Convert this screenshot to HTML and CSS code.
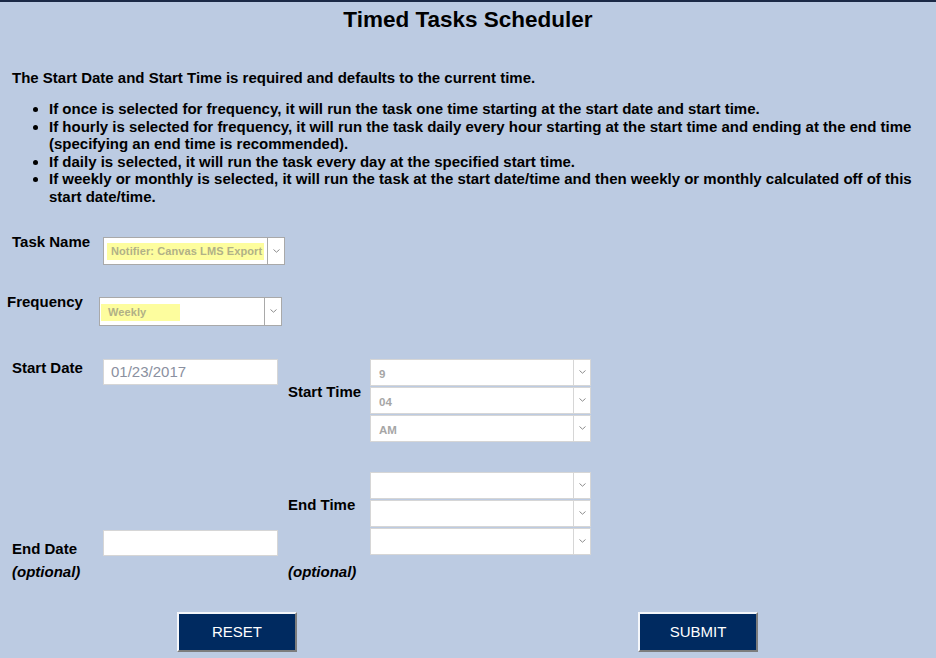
FILE: index.html
```html
<!DOCTYPE html>
<html>
<head>
<meta charset="utf-8">
<link rel="stylesheet" href="styles.css">
</head>
<body>
<div class="page">
  <h1 class="title">Timed Tasks Scheduler</h1>
  <p class="intro">The Start Date and Start Time is required and defaults to the current time.</p>
  <ul class="notes">
    <li>If once is selected for frequency, it will run the task one time starting at the start date and start time.</li>
    <li>If hourly is selected for frequency, it will run the task daily every hour starting at the start time and ending at the end time (specifying an end time is recommended).</li>
    <li>If daily is selected, it will run the task every day at the specified start time.</li>
    <li>If weekly or monthly is selected, it will run the task at the start date/time and then weekly or monthly calculated off of this start date/time.</li>
  </ul>

  <div class="row row-task">
    <div class="label label-task">Task Name</div>
    <div class="select select-task">
      <div class="select-value"><span class="hl hl-task">Notifier: Canvas LMS Export</span></div>
      <div class="select-arrow"><svg width="7" height="4" viewBox="0 0 7 4"><path d="M0.5 0.5 L3.5 3.2 L6.5 0.5" fill="none" stroke="#8c8c8c" stroke-width="1"/></svg></div>
    </div>
  </div>

  <div class="row row-freq">
    <div class="label label-freq">Frequency</div>
    <div class="select select-freq">
      <div class="select-value"><span class="hl hl-freq">Weekly</span></div>
      <div class="select-arrow"><svg width="7" height="4" viewBox="0 0 7 4"><path d="M0.5 0.5 L3.5 3.2 L6.5 0.5" fill="none" stroke="#8c8c8c" stroke-width="1"/></svg></div>
    </div>
  </div>

  <div class="dt-grid">
    <div class="label sd-label">Start Date</div>
    <div class="text-input sd-input">01/23/2017</div>
    <div class="label st-label">Start Time</div>
    <div class="sel-stack st-stack">
      <div class="select tsel"><div class="select-value tval">9</div><div class="select-arrow"><svg width="7" height="4" viewBox="0 0 7 4"><path d="M0.5 0.5 L3.5 3.2 L6.5 0.5" fill="none" stroke="#8c8c8c" stroke-width="1"/></svg></div></div>
      <div class="select tsel"><div class="select-value tval">04</div><div class="select-arrow"><svg width="7" height="4" viewBox="0 0 7 4"><path d="M0.5 0.5 L3.5 3.2 L6.5 0.5" fill="none" stroke="#8c8c8c" stroke-width="1"/></svg></div></div>
      <div class="select tsel"><div class="select-value tval">AM</div><div class="select-arrow"><svg width="7" height="4" viewBox="0 0 7 4"><path d="M0.5 0.5 L3.5 3.2 L6.5 0.5" fill="none" stroke="#8c8c8c" stroke-width="1"/></svg></div></div>
    </div>

    <div class="label ed-label">End Date</div>
    <div class="text-input ed-input"></div>
    <div class="label et-label">End Time</div>
    <div class="sel-stack et-stack">
      <div class="select tsel"><div class="select-value tval"></div><div class="select-arrow"><svg width="7" height="4" viewBox="0 0 7 4"><path d="M0.5 0.5 L3.5 3.2 L6.5 0.5" fill="none" stroke="#8c8c8c" stroke-width="1"/></svg></div></div>
      <div class="select tsel"><div class="select-value tval"></div><div class="select-arrow"><svg width="7" height="4" viewBox="0 0 7 4"><path d="M0.5 0.5 L3.5 3.2 L6.5 0.5" fill="none" stroke="#8c8c8c" stroke-width="1"/></svg></div></div>
      <div class="select tsel"><div class="select-value tval"></div><div class="select-arrow"><svg width="7" height="4" viewBox="0 0 7 4"><path d="M0.5 0.5 L3.5 3.2 L6.5 0.5" fill="none" stroke="#8c8c8c" stroke-width="1"/></svg></div></div>
    </div>

    <div class="label opt opt-left">(optional)</div>
    <div class="label opt opt-right">(optional)</div>
  </div>

  <div class="buttons">
    <button class="btn">RESET</button>
    <button class="btn">SUBMIT</button>
  </div>
</div>
</body>
</html>
```
FILE: styles.css
```css
html, body {
  margin: 0;
  padding: 0;
}
body {
  background: #bccbe2;
  font-family: "Liberation Sans", Arial, sans-serif;
  color: #000;
  border-top: 2px solid #1b2946;
  height: 656px;
  overflow: hidden;
}
.title {
  margin: 6px 0 0;
  text-align: center;
  font-size: 22.5px;
  line-height: 24px;
  font-weight: bold;
}
.intro {
  margin: 37px 0 0;
  padding-left: 12px;
  font-size: 15px;
  line-height: 17px;
  font-weight: bold;
}
.notes {
  margin: 14px 0 0;
  padding-left: 49px;
  padding-right: 11px;
  font-size: 15px;
  line-height: 17.6px;
  font-weight: bold;
}
.label {
  font-size: 15px;
  line-height: 17px;
  font-weight: bold;
}
.row {
  display: flex;
  align-items: flex-start;
}
.row-task {
  margin-top: 27px;
  padding-left: 12px;
}
.label-task {
  width: 91px;
}
.row-freq {
  margin-top: 28px;
  padding-left: 7px;
}
.label-freq {
  width: 92px;
}
.select {
  display: flex;
  background: #fff;
  border: 1px solid #d6d6d6;
  box-sizing: border-box;
}
.select-task {
  margin-top: 4px;
  width: 182px;
  height: 28px;
  border-color: #a9a9a9;
}
.select-freq {
  margin-top: 4px;
  width: 183px;
  height: 29px;
  border-color: #a9a9a9;
}
.select-value {
  flex: 1;
  display: flex;
  align-items: center;
  padding-left: 3px;
  min-width: 0;
}
.select-arrow {
  width: 16px;
  border-left: 1px solid #d6d6d6;
  display: flex;
  align-items: center;
  justify-content: center;
}
.select-task .select-arrow,
.select-freq .select-arrow {
  border-left-color: #a9a9a9;
}
.hl {
  background: #fdfd9e;
  color: #b1b187;
  font-size: 11px;
  font-weight: bold;
  letter-spacing: 0.1px;
  line-height: 17px;
  white-space: nowrap;
}
.hl-task {
  padding: 0 2px 0 4px;
  margin-top: 1px;
}
.hl-freq {
  padding: 0 34px 0 7px;
  margin-top: 2px;
  margin-left: -2px;
}
.dt-grid {
  margin-top: 33px;
  margin-left: 12px;
  display: grid;
  grid-template-columns: 91px 175px 10px 82px 221px;
  grid-template-rows: 83px 83px auto;
  row-gap: 30px;
}
.sd-label { grid-column: 1; grid-row: 1; align-self: start; }
.sd-input { grid-column: 2; grid-row: 1; align-self: start; }
.st-label { grid-column: 4; grid-row: 1; align-self: start; padding-top: 24px; }
.st-stack { grid-column: 5; grid-row: 1; }
.ed-label { grid-column: 1; grid-row: 2; align-self: end; margin-bottom: -2px; }
.ed-input { grid-column: 2; grid-row: 2; align-self: end; margin-bottom: -1px; }
.et-label { grid-column: 4; grid-row: 2; align-self: start; padding-top: 24px; }
.et-stack { grid-column: 5; grid-row: 2; }
.opt {
  grid-row: 3;
  font-style: italic;
  margin-top: -22px;
}
.opt-left { grid-column: 1; }
.opt-right { grid-column: 4; }
.text-input {
  height: 26px;
  box-sizing: border-box;
  background: #fff;
  border: 1px solid #d6d6d6;
  font-size: 15px;
  line-height: 24px;
  padding-left: 7px;
  color: #8a90a0;
}
.sel-stack {
  display: flex;
  flex-direction: column;
  gap: 1px;
}
.tsel {
  height: 27px;
}
.tval {
  padding-left: 8px;
  font-size: 11.5px;
  font-weight: bold;
  color: #a6a6a6;
  padding-top: 4px;
}
.buttons {
  display: flex;
  gap: 341px;
  padding-left: 177px;
  margin-top: 27px;
}
.btn {
  width: 120px;
  height: 40px;
  background: #002a60;
  color: #fff;
  font-family: "Liberation Sans", Arial, sans-serif;
  font-size: 15px;
  border-style: solid;
  border-width: 2px;
  border-color: #f4f6fa #7c7c7c #7c7c7c #f4f6fa;
  padding: 0;
}
```
